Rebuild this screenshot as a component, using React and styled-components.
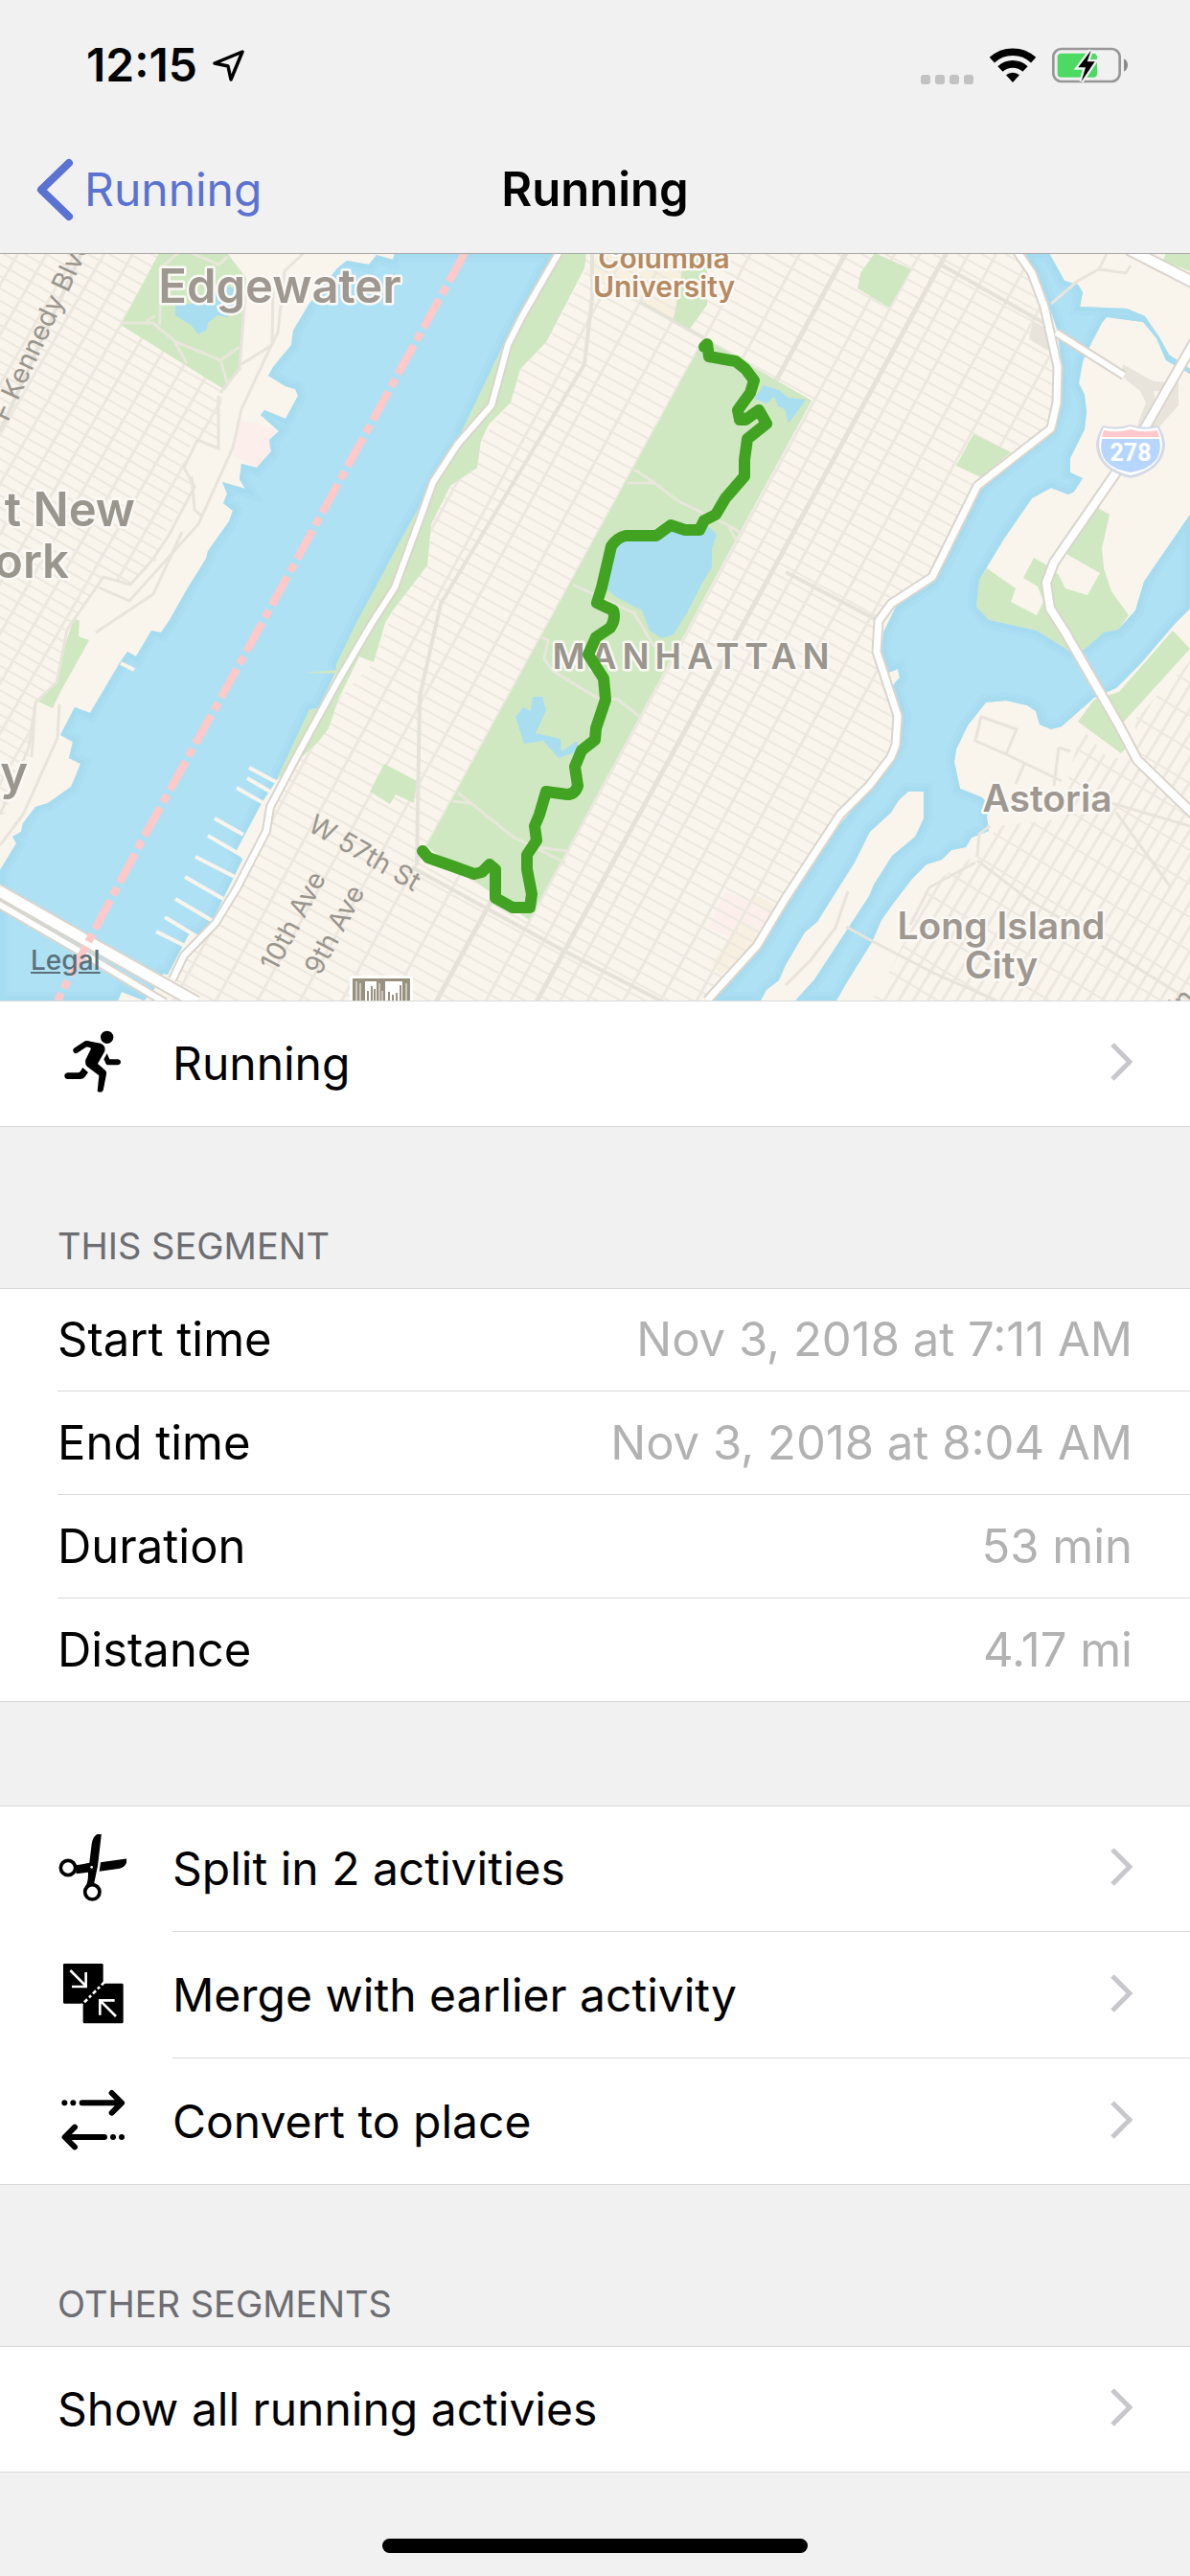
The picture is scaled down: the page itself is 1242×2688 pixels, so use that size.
import styled, { createGlobalStyle, css } from 'styled-components';

const GlobalStyle = createGlobalStyle`
  *, *::before, *::after {
    box-sizing: border-box;
  }

  body {
    margin: 0;
    background-color: #f1f1f1;
    color: #000;
    font-family: Inter, "Liberation Sans", sans-serif;
    font-size: 48px;
    line-height: 60px;
  }
`;

const Page = styled.div`
  display: flex;
  flex-direction: column;
  min-height: 100vh;
`;

const Header = styled.header`
  border-bottom: 1px solid #a9a9a9;
`;

const StatusBar = styled.div`
  display: flex;
  align-items: center;
  justify-content: space-between;
  height: 132px;
  padding: 4px 64px 0 90px;
`;

const StatusGroup = styled.div`
  display: flex;
  align-items: center;
  gap: 16px;
`;

const Clock = styled.time`
  font-size: 48px;
  font-weight: 600;
`;

const SignalDots = styled.div`
  display: flex;
  align-self: flex-end;
  gap: 5px;
`;

const Dot = styled.span`
  width: 10px;
  height: 10px;
  border-radius: 3px;
  background-color: #c2c2c2;
`;

const NavBar = styled.nav`
  display: grid;
  grid-template-columns: 1fr auto 1fr;
  align-items: center;
  height: 132px;
  padding: 0 36px;
`;

const BackLink = styled.a`
  display: flex;
  align-items: center;
  gap: 8px;
  color: #5a72d2;
  text-decoration: none;
`;

const Title = styled.h1`
  margin: 0;
  font-size: 49px;
  font-weight: 600;
`;

const MapBox = styled.div`
  position: relative;

  svg {
    display: block;
    width: 100%;
    height: auto;
  }
`;

const LegalLink = styled.a`
  position: absolute;
  left: 32px;
  bottom: 24px;
  color: #5b7079;
  font-size: 28px;
  font-weight: 500;
  line-height: 36px;
`;

const Section = styled.section`
  margin-top: ${props => (props.$gap ? '108px' : '0')};
`;

const SectionTitle = styled.h2`
  margin: 0;
  padding: 102px 60px 22px;
  color: #6d6d72;
  font-size: 38px;
  font-weight: 400;
  line-height: 44px;
`;

const group = css`
  margin: 0;
  padding: 0;
  border-top: 1px solid #d9d9d9;
  border-bottom: 1px solid #d9d9d9;
  background-color: #fff;
`;

const ActionList = styled.ul`
  ${group}
  list-style: none;
`;

const ActionItem = styled.li`
  &:first-child > button > div {
    height: 130px;
    border-top: none;
  }
`;

const ActionButton = styled.button`
  display: flex;
  align-items: center;
  width: 100%;
  padding: 0 0 0 60px;
  border: none;
  background: none;
  color: inherit;
  font: inherit;
  text-align: left;
  cursor: pointer;
`;

const ActionBody = styled.div`
  display: flex;
  flex: 1;
  align-items: center;
  justify-content: space-between;
  height: 132px;
  padding-right: 60px;
  border-top: 1px solid #d9d9d9;
`;

const Icon = styled.svg`
  flex: none;
  width: 72px;
  height: 72px;
  margin-right: 48px;
`;

const DetailList = styled.dl`
  ${group}
`;

const DetailRow = styled.div`
  display: flex;
  align-items: center;
  justify-content: space-between;
  height: 108px;
  margin-left: 60px;
  padding-right: 60px;
  border-top: 1px solid #d9d9d9;
  font-size: 49px;

  &:first-child {
    height: 106px;
    border-top: none;
  }
`;

const DetailValue = styled.dd`
  margin: 0;
  color: #b2b2b2;
`;

const HomeIndicator = styled.div`
  width: 444px;
  height: 15px;
  margin: auto auto 24px;
  border-radius: 8px;
  background-color: #000;
`;

const LocationIcon = () => (
  <svg width="34" height="34" viewBox="0 0 34 34" aria-hidden="true">
    <path d="M31 3 2 15l14 3 3 14z" fill="none" stroke="#000" strokeWidth="3.5" strokeLinejoin="round" />
  </svg>
);

const WifiIcon = () => (
  <svg width="50" height="38" viewBox="274 55 150 114" aria-hidden="true">
    <g fill="none" stroke="#000" strokeWidth="23">
      <path d="M284 96a96 96 0 0 1 130 0" />
      <path d="M310 124a57 57 0 0 1 78 0" />
    </g>
    <path d="M328 143a32 32 0 0 1 42 0L349 166z" />
  </svg>
);

const BatteryIcon = () => (
  <svg width="80" height="40" viewBox="474 52 240 120" aria-hidden="true">
    <rect x="478" y="61" width="208" height="102" rx="25" fill="none" stroke="#979797" strokeWidth="8" />
    <rect x="491" y="75" width="124" height="75" rx="12" fill="#4cd964" />
    <path d="M699 92q12 6 12 20t-12 20z" fill="#8a8a8a" />
    <path
      d="M596 66 556 119h23l-13 44 42-62h-24z"
      stroke="#f1f1f1"
      strokeWidth="14"
      paintOrder="stroke"
    />
  </svg>
);

const BackIcon = () => (
  <svg width="44" height="66" viewBox="0 0 44 66" aria-hidden="true">
    <path d="M36 5 7 33l29 28" fill="none" stroke="#5a72d2" strokeWidth="8" strokeLinecap="round" strokeLinejoin="round" />
  </svg>
);

const Chevron = () => (
  <svg width="26" height="44" viewBox="0 0 26 44" aria-hidden="true">
    <path d="M5 2l18 18L5 38" fill="none" stroke="#c7c7cc" strokeWidth="5" />
  </svg>
);

const RunIcon = () => (
  <Icon viewBox="0 0 216 216" aria-hidden="true">
    <circle cx="155" cy="25" r="20" />
    <path d="M58 66 90 45l30 8" fill="none" stroke="#000" strokeWidth="18" strokeLinecap="round" strokeLinejoin="round" />
    <path d="M90 36l45 8q18 8 13 25l-22 39 24 21q5 5 3 12l-10 50q-6 11-18 3l5-49-33-25q-13-9-9-25l17-34z" />
    <path d="M155 76l8 18h26q9 2 9 9t-9 9h-29q-9 0-11-11l-4-7z" />
    <path d="M79 120l17 15-11 15q-5 6-13 6H32q-10-2-10-10t10-10h31q6 0 9-5z" />
  </Icon>
);

const SplitIcon = () => (
  <Icon viewBox="0 0 216 216" aria-hidden="true">
    <g fill="none" stroke="#000" strokeWidth="11">
      <circle cx="33" cy="105" r="23" />
      <circle cx="109" cy="181" r="23" />
    </g>
    <path d="M55 97q14-2 45-8l7-58Q112-3 138-4l-12 103-12 58-27 8q10-16 9-46l-37 5z" />
    <path d="M135 88l84-12q-2 25-24 31l-64 9z" />
    <circle cx="107" cy="103" r="4" fill="#fff" />
  </Icon>
);

const MergeIcon = () => (
  <Icon viewBox="0 0 216 216" aria-hidden="true">
    <rect x="18" y="12" width="125" height="125" rx="4" />
    <rect x="80" y="74" width="126" height="125" rx="4" />
    <g fill="none" stroke="#fff" strokeWidth="8">
      <path d="M40 33l49 49M89 39v45H45M183 177l-50-50M133 173v-46h46" />
      <path d="M147 70l-70 70" strokeDasharray="13 8 9 8" />
    </g>
  </Icon>
);

const ConvertIcon = () => (
  <Icon viewBox="0 0 216 216" aria-hidden="true">
    <g fill="none" stroke="#000" strokeWidth="18" strokeLinecap="round" strokeLinejoin="round">
      <path d="M77 52h122M170 21l31 31-31 31" />
      <path d="M147 159H25M54 128l-31 31 31 31" />
    </g>
    <circle cx="22" cy="52" r="9" />
    <circle cx="49" cy="52" r="9" />
    <circle cx="174" cy="159" r="9" />
    <circle cx="201" cy="159" r="9" />
  </Icon>
);

const hudson =
  'M412 264 410 271 393 266 385 276 362 272 352 280 322 318 306 345 304 360 285 383 280 392 298 403 308 406 311 413 298 437 276 428 272 433 291 450 281 459 283 471 268 488 252 484 250 500 256 510 232 503 237 515 233 525 243 533 239 544 217 575 215 583 195 615 177 647 168 660 158 658 142 685 133 680 126 690 94 744 78 738 63 767 76 774 72 791 84 797 78 812 74 821 50 838 37 842 24 859 22 868 13 873 17 880 0 908V1044H123L127 1035 150 1044 158 1037 170 1016 175 1017 197 975 208 975 222 960 245 913 253 897 247 887 273 838 288 815 323 740 332 739 351 700 351 693 372 650 420 560 477 460 517 377 527 357 577 264Z';

const eastRiver =
  'M1070 264 1087 297 1103 343 1108 380 1108 423 1098 450 1025 508 993 573 973 608 935 633 922 660 920 682 927 702 937 698 939 707 932 715 942 747 938 778 910 820 877 860 820 945 793 990 744 1044H873L885 1023 910 983 920 960 932 943 952 917 967 902 983 897 993 887 1008 884 1014 874 1032 867 1030 853 1032 840 1025 832 1002 823 996 795 998 782 1010 757 1029 733 1050 731 1072 736 1081 742 1085 756 1097 761 1108 758 1142 728 1165 718 1190 693 1227 650 1242 635V537L1200 598 1194 607 1185 637 1167 657 1152 660 1128 681 1117 680 1082 658 1032 647 1019 633 1022 605 1048 562 1077 520 1097 509 1115 516 1121 513 1130 499 1117 493 1117 478 1132 448 1134 430 1132 412 1126 400 1130 377 1138 360 1150 337 1155 331 1193 336 1207 353 1217 376 1242 390V385L1220 370 1210 352 1195 330 1176 322 1127 320 1130 305 1125 297 1111 293 1095 264Z';

const rooseveltIsland =
  'M948 826H964V854L955 873 931 893 912 923 907 935 850 1022 830 1044H794L800 1033 813 1023 820 1007 840 973 853 962 892 900 908 868 930 848 938 835Z';

const manhattan =
  'M577 264H1060L1077 285 1107 383 1105 420 1097 447 1020 507 973 602 930 630 917 648 915 680 937 747 935 777 907 820 820 937 738 1044H170L192 997 225 963 247 927 278 867 282 842 317 788 343 760 353 730 390 691 410 637 446 590 450 547 470 507 498 488 502 460 533 420 543 385 570 357 612 280Z';

const newJersey =
  'M0 264H166L126 339 232 405 228 468 200 460 191 488 203 508 170 560 163 585 135 610 108 602 70 655 60 712 35 735 30 790 0 860Z';

const queens =
  'M1242 690 1185 750 1186 793 1155 790 1128 758 1105 855 1040 862 1030 885 975 920 925 1020 910 1044H1242Z';

const parks = [
  'M577 264H612L610 280 570 357 543 385 533 420 510 443 502 460 498 488 470 507 450 547 446 590 410 637 402 650 390 691 375 685 353 730 343 760 333 773 317 788 290 813 288 815 323 740 332 739 351 702 318 703 351 699 351 693 372 650 420 560 477 460 517 377 527 357Z',
  'M735 353 847 418 552 960 445 883Z',
  'M166 264H237L257 290 250 383 235 407 126 339Z',
  'M77 645 83 648 82 664 93 668 63 722 55 739 40 732 59 712 68 673Z',
  'M401 797 435 815 432 838 413 829 407 839 386 826Z',
  'M715 264H738V318L720 343 703 334Z',
  'M913 264 951 281 928 321 895 301 898 285Z',
  'M1016 453 1055 472 1024 498 998 486Z',
  'M1217 264H1242V283L1214 272Z',
  'M1224 658 1242 677 1172 754 1183 773 1170 786 1125 753 1142 730 1168 722Z',
  'M1030 593 1060 614 1055 628 1082 642 1089 628 1083 612 1068 603 1079 582 1093 590 1105 600 1112 614 1135 621 1148 598 1113 578 1146 530 1158 537 1150 572 1152 593 1160 617 1178 642 1167 657 1152 660 1128 681 1117 680 1082 658 1032 647 1019 633 1022 605Z',
];

const lakes = [
  'M643 567 700 552 740 550 748 558 743 572V592L732 610 718 638 703 662 691 666 678 658 670 637 643 623 634 615Z',
  'M556 727H566L570 741 559 765 585 771 586 784 603 773V784L583 791 567 773 547 776 538 748 546 738 554 742Z',
  'M797 402 813 407 823 415 841 417 823 442 819 427 812 424 808 414 800 421 787 416Z',
  'M183 318 200 317 235 297 245 302 247 323 237 331 227 329 217 337 216 344 207 349 200 340 183 329Z',
];

const piers =
  'M260 801 288 816M258 812 282 826M247 822 275 838M224 854 254 871M217 872 253 893M204 894 245 915M193 915 233 938M183 938 222 961M172 957 205 977M163 972 193 987M126 692 140 699';

const parkRoads =
  'M662 490 682 503 708 523 760 548 775 557M655 504H682M760 548 770 567M598 610 662 640 683 675M565 665 572 668 568 688 577 700 623 728 645 730 668 748M478 827 535 873 590 900M472 836 492 838M560 884 592 888M127 337H160L182 356 230 376 250 362M167 339V280L186 264M182 356 195 379M230 376 238 402M200 264 228 276 238 268M153 335 162 329';

const countyRoads =
  'M317 264 297 283 290 347 280 367 252 427 243 467 207 547 135 627 103 613M228 413V468L206 459 192 488 203 508 177 557 160 583 136 610 108 602 70 657 59 712 37 733 30 780 0 850M243 305 256 306 250 385 230 410M285 300 284 360 252 380M200 497 203 532 210 538M62 735 60 770 24 850 0 882M37 733 33 790M190 555 160 620 100 660M1097 317 1125 293 1147 281 1155 265M1147 281 1175 285 1180 277M883 967 912 983 980 1018 1040 1044M885 930 872 968 846 1002 820 1028M1150 987 1242 1044M1020 893 1022 870 1033 862M1018 900 970 926 950 965M1150 835 1242 862M1165 848 1222 926M1020 898 1075 940 1110 960M1024 748 1061 761 1050 787 1018 773ZM1050 787 1108 815M1070 795 1060 818M1105 780 1100 820M1105 780 1117 784';

const westSideHighway =
  'M583 264 545 330 530 360 522 390 513 423 478 463 452 503 440 537 423 583 412 613 387 652 353 710 313 783 282 842 278 867 247 927 225 963 192 997 180 1022';

const fdrDrive =
  'M1060 260 1077 285 1090 320 1104 383 1103 420 1097 447 1020 507 973 602 930 630 917 648 915 680 937 747 935 777 930 790 907 820 877 850 820 937 790 987 738 1044';

const interstate =
  'M1248 354 1197 443 1167 490 1100 587 1092 608 1096 635 1112 660 1168 757 1187 793 1246 850';

const highways = [
  { d: westSideHighway, width: 6 },
  { d: fdrDrive, width: 7 },
  { d: interstate, width: 8 },
  { d: 'M1178 260 1246 295', width: 10 },
  { d: 'M1102 347 1173 392', width: 6 },
  { d: 'M-4 928 100 987 205 1046', width: 11 },
  { d: 'M-4 942 87 995 172 1046', width: 6 },
];

const stateLine = 'M485 264 420 382 267 662 145 883 90 987 60 1044';

const route =
  'M735 362 738 359 740 372 768 377 778 385 787 397 783 410 770 428 772 438H778L792 428 800 442 780 458 777 480V497L757 520 747 537 735 543 730 553H715L700 548 685 559 653 559Q644 561 638 570L628 613 623 629 640 637Q643 646 637 655L622 665 614 683 630 708 632 730 622 760 621 772 607 783 600 800 603 820Q600 829 592 829L570 826 563 850 558 862 560 877 550 892V907L555 933 553 947H535L517 937V907L511 902 503 910 495 912 470 903 447 895 441 888';

const range = (from, to, step) =>
  Array.from({ length: Math.ceil((to - from) / step) }, (_, i) => from + i * step);

// Streets and avenues of one district, drawn in its own rotated frame
const StreetGrid = ({ clip, origin, angle, streets, avenues, main = [] }) => (
  <g clipPath={`url(#${clip})`}>
    <g transform={`translate(${origin}) rotate(${angle})`} fill="none" stroke="#ece8e0">
      <path d={streets.map(y => `M-900 ${y}H900`).join('')} strokeWidth="2" />
      <path d={avenues.map(x => `M${x}-900V1000`).join('')} strokeWidth="3" />
      <path d={main.map(x => `M${x}-900V1000`).join('')} stroke="#e5e2da" strokeWidth="5" />
    </g>
  </g>
);

const MapLabel = styled.text`
  fill: ${props => props.$color || '#9a958d'};
  stroke: #fbf9f5;
  stroke-width: ${props => (props.$plain ? '0' : '5px')};
  stroke-linejoin: round;
  paint-order: stroke;
  font-size: ${props => props.$size}px;
  font-weight: ${props => (props.$plain ? 400 : 600)};
  letter-spacing: ${props => (props.$wide ? '6px' : 'normal')};
  text-anchor: ${props => props.$anchor || 'middle'};
`;

const ShieldText = styled.text`
  fill: #fff;
  font-family: Roboto, sans-serif;
  font-size: 25px;
  font-weight: 700;
  text-anchor: middle;
`;

const RouteMap = () => (
  <MapBox>
    <svg viewBox="0 265 1242 779" role="img" aria-label="Map of the run">
      <defs>
        <clipPath id="manhattan"><path d={manhattan} /></clipPath>
        <clipPath id="jersey"><path d={newJersey} /></clipPath>
        <clipPath id="queens"><path d={queens} /></clipPath>
        <clipPath id="water"><path d={hudson + eastRiver} /></clipPath>
      </defs>

      <rect y="265" width="1242" height="779" fill="#f9f4ec" />
      <path d="M250 438 268 442 291 450 281 459 283 471 268 488 243 475Z" fill="#fbeeeb" />
      <path d="M625 265H715L703 334 643 300 612 284Z" fill="#f8f0df" />
      <path d="M757 930 810 952 800 972 772 962 762 978 740 968Z" fill="#fbeeeb" />
      <path d="M787 933 812 946 806 954 784 942ZM772 962 793 971 796 988 752 1017 743 1006Z" fill="#f7efdf" />

      <StreetGrid
        clip="manhattan"
        origin="735 353"
        angle={28.7}
        streets={range(-360, 1000, 12)}
        avenues={[-154, -115, -77, -38, 0, 45, 132, 155, 200, 225, 258, 292, 325]}
        main={[87, 179]}
      />
      <StreetGrid
        clip="jersey"
        origin="126 339"
        angle={30}
        streets={range(-300, 700, 11)}
        avenues={range(-312, 200, 26)}
      />
      <StreetGrid
        clip="queens"
        origin="1080 860"
        angle={31}
        streets={range(-300, 300, 30)}
        avenues={range(-300, 300, 13)}
      />
      <path
        d="M618 264V310L610 380 460 630 438 727 435 903M85 264 0 450M430 905 590 993 720 1060M820 597 917 648M980 275 1100 343M668 315 735 353"
        fill="none"
        stroke="#e5e2da"
        strokeWidth="4"
      />

      {parks.map(d => <path key={d} d={d} fill="#cfe8c1" />)}
      <path d={hudson + eastRiver} fill="#afe1f5" />
      <g clipPath="url(#water)" fill="none" stroke="#a2daed">
        <path d={hudson + eastRiver + rooseveltIsland} strokeOpacity="0.35" strokeWidth="18" />
        <path d={hudson + eastRiver + rooseveltIsland} strokeOpacity="0.5" strokeWidth="9" />
      </g>
      <path d={rooseveltIsland} fill="#f9f4ec" />
      <path d={piers} stroke="#f9f4ec" strokeWidth="4" />
      <path d="M318 702 352 699V703Z" fill="#cfe8c1" />
      {lakes.map(d => <path key={d} d={d} fill="#a9def1" />)}
      <path d={parkRoads} fill="none" stroke="#e9e6dc" strokeWidth="3" />
      <path d={countyRoads} fill="none" stroke="#e8e4dc" strokeWidth="3" />

      <path d="M1172 380 1204 398 1230 399 1230 423 1204 452 1187 444 1196 420 1190 408 1170 392Z" fill="#e8e4dc" />
      <path d="M1204 408H1215L1206 424Z" fill="#f9f4ec" />
      <path d="M1078 335 1094 345 1094 366 1074 354Z" fill="#e8e4dc" />

      <g fill="none" strokeLinejoin="round">
        {highways.map(({ d, width }) => (
          <path key={d} d={d} stroke="#dad5cc" strokeWidth={width + 4} />
        ))}
        {highways.map(({ d, width }) => (
          <path key={d} d={d} stroke="#fff" strokeWidth={width} />
        ))}
        <path d={stateLine} stroke="#ffc8c9" strokeWidth="8" strokeDasharray="34 6 9 6" />
      </g>

      <MapLabel x="292" y="316" $size={49} $color="#9f9891">Edgewater</MapLabel>
      <MapLabel x="141" y="549" $size={49} $anchor="end">t New</MapLabel>
      <MapLabel x="72" y="603" $size={49} $anchor="end">ork</MapLabel>
      <MapLabel x="29" y="824" $size={49} $anchor="end">y</MapLabel>
      <MapLabel x="693" y="280" $size={30} $color="#b68a61">Columbia</MapLabel>
      <MapLabel x="693" y="310" $size={30} $color="#b68a61">University</MapLabel>
      <MapLabel x="724" y="698" $size={37} $wide>MANHATTAN</MapLabel>
      <MapLabel x="1093" y="847" $size={39} $color="#9f9891">Astoria</MapLabel>
      <MapLabel x="1045" y="980" $size={39} $color="#9f9891">Long Island</MapLabel>
      <MapLabel x="1045" y="1021" $size={39} $color="#9f9891">City</MapLabel>
      <MapLabel transform="translate(8 441) rotate(-65)" $size={28} $anchor="start" $plain>F Kennedy Blvd</MapLabel>
      <MapLabel transform="translate(320 866) rotate(30)" $size={28} $anchor="start" $plain>W 57th St</MapLabel>
      <MapLabel transform="translate(288 1015) rotate(-62)" $size={28} $anchor="start" $plain>10th Ave</MapLabel>
      <MapLabel transform="translate(334 1019) rotate(-62)" $size={28} $anchor="start" $plain>9th Ave</MapLabel>
      <MapLabel transform="translate(1233 1060) rotate(-50)" $size={28} $anchor="start" $plain>in</MapLabel>

      <path d={route} fill="none" stroke="#42a323" strokeWidth="12" strokeLinecap="round" strokeLinejoin="round" />

      <path
        d="M1151 444Q1166 448 1180 443 1194 448 1209 444 1216 455 1216 465 1214 491 1180 499 1146 491 1144 465 1144 455 1151 444Z"
        fill="#d3d9e8"
      />
      <path
        d="M1152 446Q1166 450 1180 445 1194 450 1208 446 1213 456 1213 465 1211 489 1180 496 1149 489 1147 465 1147 456 1152 446Z"
        fill="#fff"
      />
      <path d="M1152 449Q1168 452 1180 448 1192 452 1208 449L1210 456H1150Z" fill="#ffc8cb" />
      <path d="M1150 458H1210Q1216 487 1180 493 1144 487 1150 458Z" fill="#b6d6ff" />
      <ShieldText x="1180" y="481">278</ShieldText>

      <rect x="365" y="1018" width="66" height="40" rx="4" fill="#fff" />
      <path d="M368 1021H428V1044H368Z" fill="#99917f" />
      <path d="M381 1024H393V1044H381ZM402 1024H420V1044H402Z" fill="#fff" />
      <path
        d="M384 1044V1034M388 1044V1029M391 1044V1032M406 1044V1035M410 1044V1038M414 1044V1036M418 1044V1028"
        stroke="#99917f"
        strokeWidth="2"
      />
      <path
        d="M372 1024V1044M376 1026V1044M396 1026V1044M399 1034V1044M424 1026V1044"
        stroke="#fff"
        strokeWidth="1"
      />
    </svg>
    <LegalLink href="#legal">Legal</LegalLink>
  </MapBox>
);

const details = [
  { label: 'Start time', value: 'Nov 3, 2018 at 7:11 AM' },
  { label: 'End time', value: 'Nov 3, 2018 at 8:04 AM' },
  { label: 'Duration', value: '53 min' },
  { label: 'Distance', value: '4.17 mi' },
];

const Action = ({ icon, children }) => (
  <ActionItem>
    <ActionButton type="button">
      {icon}
      <ActionBody>
        <span>{children}</span>
        <Chevron />
      </ActionBody>
    </ActionButton>
  </ActionItem>
);

const App = () => {
  return (
    <Page>
      <GlobalStyle />
      <Header>
        <StatusBar>
          <StatusGroup>
            <Clock>12:15</Clock>
            <LocationIcon />
          </StatusGroup>
          <StatusGroup>
            <SignalDots>
              <Dot />
              <Dot />
              <Dot />
              <Dot />
            </SignalDots>
            <WifiIcon />
            <BatteryIcon />
          </StatusGroup>
        </StatusBar>
        <NavBar>
          <BackLink href="#running">
            <BackIcon />
            Running
          </BackLink>
          <Title>Running</Title>
        </NavBar>
      </Header>

      <main>
        <RouteMap />
        <ActionList>
          <Action icon={<RunIcon />}>Running</Action>
        </ActionList>

        <Section>
          <SectionTitle>THIS SEGMENT</SectionTitle>
          <DetailList>
            {details.map(({ label, value }) => (
              <DetailRow key={label}>
                <dt>{label}</dt>
                <DetailValue>{value}</DetailValue>
              </DetailRow>
            ))}
          </DetailList>
        </Section>

        <Section $gap>
          <ActionList>
            <Action icon={<SplitIcon />}>Split in 2 activities</Action>
            <Action icon={<MergeIcon />}>Merge with earlier activity</Action>
            <Action icon={<ConvertIcon />}>Convert to place</Action>
          </ActionList>
        </Section>

        <Section>
          <SectionTitle>OTHER SEGMENTS</SectionTitle>
          <ActionList>
            <Action>Show all running activies</Action>
          </ActionList>
        </Section>
      </main>

      <HomeIndicator />
    </Page>
  );
};

export default App;
